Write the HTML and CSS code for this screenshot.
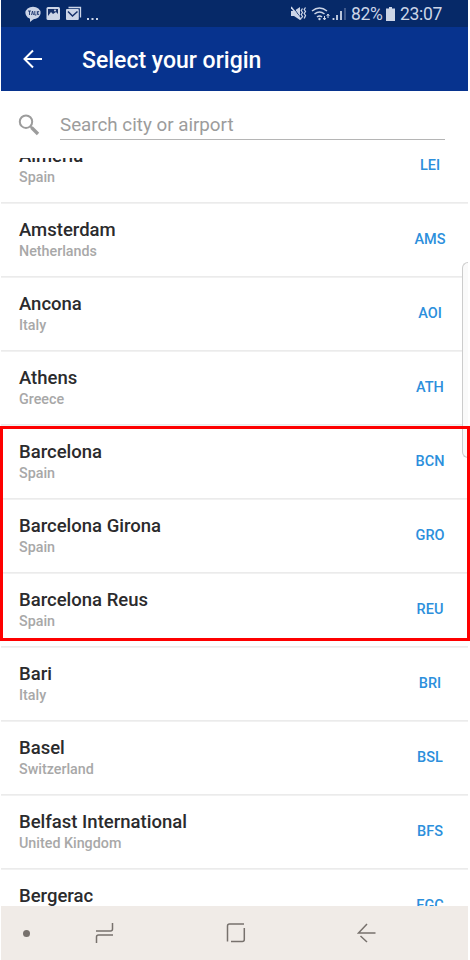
FILE: index.html
```
<!DOCTYPE html>
<html lang="en">
<head>
<meta charset="utf-8">
<title>Select your origin</title>
<link rel="stylesheet" href="styles.css">
</head>
<body>
<div class="screen">
  <div class="status">
    <svg class="status-left" width="76" height="20" viewBox="0 0 76 20">
      <ellipse cx="8" cy="8" rx="7.6" ry="6.2" fill="#ccd5e7"/>
      <path d="M5 12v5l5-4z" fill="#ccd5e7"/>
      <path d="M3 6h3M4.500 6v4M6.500 10l1-4 1 4M9.800 6v4h1.500M12.300 6v4M14 6l-1.500 2 1.500 2" stroke="#16316b" stroke-width=".9" fill="none"/>
      <rect x="21.500" y="2" width="13.500" height="13" rx="1.500" fill="#ccd5e7"/>
      <path d="M23 4h10v5l-2-2-3 2-2-2-3 4z" fill="#16316b"/><circle cx="30" cy="5.500" r="1" fill="#ccd5e7"/>
      <path d="M43.500 2.500H55.500v10" stroke="#ccd5e7" stroke-width="1.300" fill="none"/>
      <rect x="41" y="4" width="12.800" height="11" rx="1" fill="#ccd5e7"/>
      <path d="M43 6.500l4.500 4.500 5-4.500" stroke="#16316b" stroke-width="1.500" fill="none"/>
      <path d="M62 15h2v-2h-2zM66.500 15h2v-2h-2zM71 15h2v-2h-2z" fill="#ccd5e7"/>
    </svg>
    <svg class="status-right" width="58" height="18" viewBox="0 0 58 18">
      <path d="M0 6h3l6-4v13l-6-4H0z" fill="#ccd5e7"/>
      <path d="M1.500 1.500l9 12.500" stroke="#062968" stroke-width="1"/>
      <path d="M0 2l10 12.500" stroke="#ccd5e7" stroke-width="1.500"/>
      <path d="M11.500 3.500l-1.300 2 1.300 2-1.300 2 1.300 2-1.300 2M14.500 2.500l-1.300 2 1.300 2-1.300 2 1.300 2-1.300 3" stroke="#ccd5e7" stroke-width="1.300" fill="none"/>
      <path d="M21 6q7.500-6 15 0M23.500 9q5-4 10 0M26 12q2.500-2 5 0" stroke="#ccd5e7" stroke-width="1.500" fill="none"/>
      <circle cx="28.500" cy="14" r="1.200" fill="#ccd5e7"/>
      <path d="M33.500 15v-4M32.200 13l1.300 2 1.300-2M37 9v4M35.700 11l1.300-2 1.300 2" stroke="#ccd5e7" fill="none"/>
      <path d="M42.500 15v-2M46 15v-5M50 15V6" stroke="#ccd5e7" stroke-width="1.800"/><path d="M54 15V3" stroke="#667ba5" stroke-width="1.200"/>
    </svg>
    <span class="percent">82%</span>
    <svg class="battery" width="9" height="14" viewBox="0 0 9 14"><path d="M3 0h3v1.500h3V14H0V1.500h3z" fill="#ccd5e7"/></svg>
    <span class="clock">23:07</span>
  </div>
  <header class="appbar">
    <svg class="back" width="20" height="20" viewBox="0 0 20 20" fill="none" stroke="#fff" stroke-width="2"><path d="M19 10H2M10 1.500L1.500 10l8.500 8.500"/></svg>
    <h1 class="title">Select your origin</h1>
  </header>
  <div class="search">
    <svg class="lens" width="22" height="22" viewBox="0 0 22 22" fill="none" stroke="#9c9c9c"><circle cx="8" cy="7.700" r="6.200" stroke-width="2"/><path d="M12 12l2 2" stroke-width="2"/><path d="M13.500 13.500l6.500 6.500" stroke-width="3.400"/></svg>
    <div class="field">Search city or airport</div>
  </div>
  <main class="viewport">
    <ul class="list">
      <li class="row"><div><div class="name">Almeria</div><div class="country">Spain</div></div><span class="code">LEI</span></li>
      <li class="row"><div><div class="name">Amsterdam</div><div class="country">Netherlands</div></div><span class="code">AMS</span></li>
      <li class="row"><div><div class="name">Ancona</div><div class="country">Italy</div></div><span class="code">AOI</span></li>
      <li class="row"><div><div class="name">Athens</div><div class="country">Greece</div></div><span class="code">ATH</span></li>
      <li class="row"><div><div class="name">Barcelona</div><div class="country">Spain</div></div><span class="code">BCN</span></li>
      <li class="row"><div><div class="name">Barcelona Girona</div><div class="country">Spain</div></div><span class="code">GRO</span></li>
      <li class="row"><div><div class="name">Barcelona Reus</div><div class="country">Spain</div></div><span class="code">REU</span></li>
      <li class="row"><div><div class="name">Bari</div><div class="country">Italy</div></div><span class="code">BRI</span></li>
      <li class="row"><div><div class="name">Basel</div><div class="country">Switzerland</div></div><span class="code">BSL</span></li>
      <li class="row"><div><div class="name">Belfast International</div><div class="country">United Kingdom</div></div><span class="code">BFS</span></li>
      <li class="row"><div><div class="name">Bergerac</div></div><span class="code">EGC</span></li>
    </ul>
  </main>
  <nav class="navbar">
    <span class="dot"></span>
    <svg class="recents" width="20" height="22" viewBox="0 0 20 22" fill="none" stroke="#77716d" stroke-width="1.500"><path d="M1 9h14.500q2 0 2-2V1M18 13H3.500q-2 0-2 2v6"/></svg>
    <svg class="home" width="20" height="20" viewBox="0 0 20 20" fill="none" stroke="#77716d" stroke-width="1.500"><path d="M1.500 18.500V3q0-2 2-2H18M18.300 5v11.500q0 2-2 2H5"/></svg>
    <svg class="nav-back" width="20" height="20" viewBox="0 0 20 20" fill="none" stroke="#77716d" stroke-width="1.500"><path d="M18.500 10H1.500L10 1M3.500 13l6.500 6"/></svg>
  </nav>
</div>
<div class="edge-handle"></div>
<div class="highlight"></div>
</body>
</html>
```
FILE: styles.css
```
* { box-sizing: border-box; }
body {
  margin: 0;
  position: relative;
  width: 470px;
  height: 960px;
  overflow: hidden;
  background: #fff;
  font-family: Roboto, "Liberation Sans", sans-serif;
}
.screen {
  display: flex;
  flex-direction: column;
  width: 467px;
  height: 960px;
  margin-left: 1px;
}
svg { display: block; flex: none; }
.status {
  display: flex;
  flex: none;
  align-items: flex-start;
  height: 27px;
  padding: 0 26px 0 24px;
  background: #062968;
  color: #ccd5e7;
  font-size: 17.5px;
  line-height: 29px;
}
.status-left { margin-top: 5px; }
.status-right { margin: 5px 0 0 auto; }
.percent { width: 32px; margin-left: 2px; white-space: nowrap; letter-spacing: -0.3px; }
.battery { margin: 7px 5px 0 3px; }
.clock { width: 42px; white-space: nowrap; letter-spacing: -0.3px; }
.appbar {
  display: flex;
  flex: none;
  align-items: center;
  height: 64px;
  padding-left: 22px;
  background: #07338e;
}
.title {
  margin: 3px 0 0 39px;
  color: #fff;
  font-size: 23px;
  font-weight: 500;
  line-height: 28px;
}
.search {
  display: flex;
  flex: none;
  height: 67px;
  padding: 23px 23px 0 17px;
}
.lens { margin-right: 20px; }
.field {
  flex: 1;
  height: 26px;
  border-bottom: 1px solid #b5b5b5;
  color: #9c9c9c;
  font-size: 18.8px;
  line-height: 22px;
}
.viewport { height: 748px; flex: none; overflow: hidden; }
.list { margin: -29px 0 0; padding: 0; list-style: none; }
.row {
  display: flex;
  justify-content: space-between;
  height: 74px;
  padding: 15px 22px 0 18px;
  background: linear-gradient(#f1f1f1, #f1f1f1) 0 0 / 100% 1px no-repeat;
  border-bottom: 1px solid #ebebeb;
}
.name {
  color: #2b2b2d;
  font-size: 18.5px;
  font-weight: 500;
  line-height: 24px;
}
.country {
  margin-top: -1px;
  color: #a8a8a8;
  font-size: 14.3px;
  font-weight: 500;
  line-height: 20px;
}
.code {
  width: 32px;
  margin-top: 12px;
  color: #2c8fdc;
  font-size: 14.5px;
  font-weight: 500;
  line-height: 20px;
  text-align: center;
}
.navbar {
  display: flex;
  flex: 1;
  align-items: center;
  padding-left: 22px;
  background: #f0ebe7;
}
.dot { width: 7px; height: 7px; border-radius: 50%; background: #77716d; }
.recents { margin-left: 65px; }
.home { margin-left: 111px; }
.nav-back { margin-left: 111px; }
.edge-handle {
  position: absolute;
  left: 462px;
  top: 262px;
  width: 6px;
  height: 196px;
  border: 1px solid #ccc;
  border-right: 0;
  border-radius: 6px 0 0 6px;
  background: #fafafa;
}
.highlight {
  position: absolute;
  left: 0;
  top: 426px;
  width: 470px;
  height: 215px;
  border: 3px solid #fe0000;
}
```
